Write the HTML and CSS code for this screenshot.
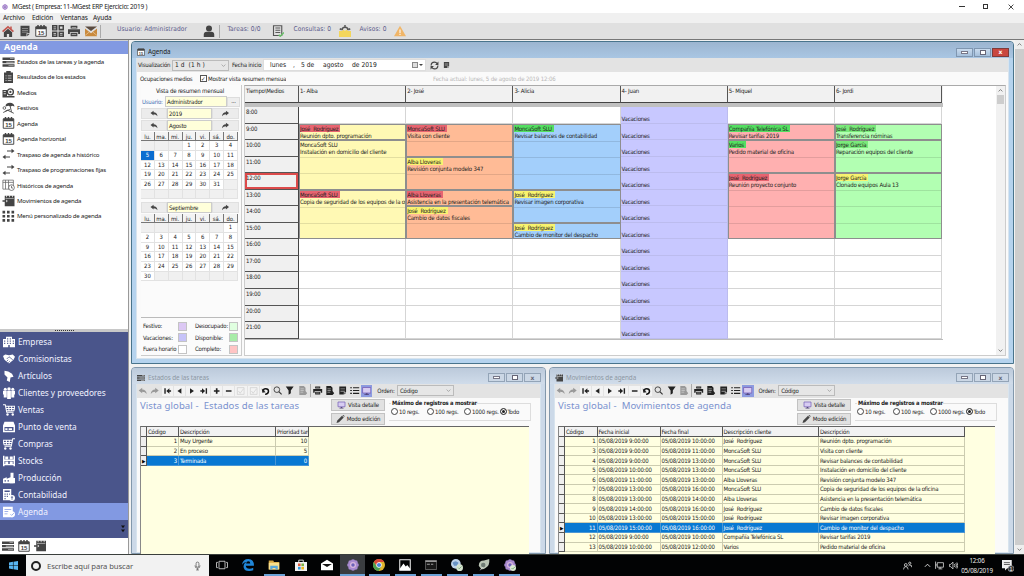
FILE: index.html
```html
<!DOCTYPE html>
<html lang="es">
<head>
<meta charset="utf-8">
<title>MGest ( Empresa: 11-MGest ERP Ejercicio: 2019 )</title>
<link rel="stylesheet" href="styles.css">
</head>
<body>
<svg class="defs" aria-hidden="true">
  <symbol id="home" viewBox="0 0 16 16"><path fill="#c4574f" d="M8 1 0 8l1.500 1.500L8 4l6.500 5.500L16 8l-3-2.700V2h-2v1.600z"/><path d="M2.500 9.500 8 5l5.500 4.500V16h-4v-4h-3v4h-4z"/></symbol>
  <symbol id="doc" viewBox="0 0 16 16"><path d="M2 1h12v10h-4v4H2z"/><path fill="#999" d="M4 4h8v1H4zM4 6.500h8v1H4zM4 9h8v1H4z"/><path d="m11 15 3-3h-3z"/></symbol>
  <symbol id="cal" viewBox="0 0 16 16"><path fill="#fff" stroke="#444" stroke-width="1.300" d="M1 2.500h14V15H1z"/><path d="M1 2h14v3.500H1zM3 0h2v3H3zM7 0h2v3H7zM11 0h2v3h-2z"/><text x="8" y="13.500" class="cal-num">15</text></symbol>
  <symbol id="grid" viewBox="0 0 16 16"><path fill-rule="evenodd" d="M0 0h7.300v7.300H0zM8.700 0H16v7.300H8.700zM0 8.700h7.300V16H0zM8.700 8.700H16V16H8.700zM2 2v1h3.300V2zM2 4.500v1h3.300v-1zM10.700 2v3h3.300V2zM2 11v1h3.300v-1zM2 13v1h3.300v-1zM10.700 11v1h3.300v-1zM10.700 13v1h3.300v-1z"/></symbol>
  <symbol id="print" viewBox="0 0 16 16"><path d="M3.500 1h9v3.500h-9zM0 5.500h16V12h-2.500V9.500h-11V12H0zM3.500 10.500h9V15h-9z"/><path fill="#eee" d="M5 12h6v.8H5zM5 2.500h6v.8H5z"/></symbol>
  <symbol id="mail" viewBox="0 0 16 16"><path fill="#5a4b40" d="M0 2h16l-8 6z"/><path fill="#c98a3d" d="M0 4.500 8 11l8-6.500V15H0z"/><path stroke="#e7c79c" fill="none" d="m0 14 6-5m10 5-6-5"/></symbol>
  <symbol id="person" viewBox="0 0 16 16"><circle cx="8" cy="4.500" r="4"/><path d="M1 16v-3q0-4 4-4h6q4 0 4 4v3z"/></symbol>
  <symbol id="check-doc" viewBox="0 0 16 16"><path fill="none" stroke="#555" stroke-width="1.500" d="M2 1h11v13H2z"/><path stroke="#555" stroke-width="1.300" d="M4.500 4H11M4.500 7H11M4.500 10H11"/><path stroke="#6ac06a" fill="none" stroke-width="2" d="m9 13 2 2 5-5"/></symbol>
  <symbol id="bell" viewBox="0 0 16 16"><path fill="none" stroke="#555" stroke-width="2" d="M4 7q0-4 4-4t4 4M8 3V0M1 5l2 1M15 5l-2 1"/><path fill="#f3d65c" d="M0 8h4l2-2 2 2 2-2 2 2h4v8H0z"/></symbol>
  <symbol id="warn" viewBox="0 0 16 16"><path fill="#f0b567" d="M8 1 16 15H0z"/><path fill="#fff" d="M7.300 6h1.400v5H7.300zM7.300 12h1.400v1.400H7.300z"/></symbol>
  <symbol id="bars" viewBox="0 0 16 16"><path d="M0 2h16v3.200H0zM0 6.500h16v3.200H0zM0 11h16v3.200H0z"/><path fill="#ddd" d="M10 3.200h5v.8h-5zM5 7.700h10v.8H5zM8 12.200h7v.8H8z"/></symbol>
  <symbol id="clip" viewBox="0 0 16 16"><path d="M2 2h3V0h6v2h3v14H2z"/><path fill="#ddd" d="M4 6h1.500v1H4zM7 6h5v1H7zM4 9h1.500v1H4zM7 9h5v1H7zM4 12h1.500v1H4zM7 12h5v1H7z"/></symbol>
  <symbol id="media" viewBox="0 0 16 16"><path d="M0 4h6v9H0zM0 12h16v2H0z"/><path stroke="#fff" d="M1.500 6h3M1.500 9h3"/><circle cx="10.500" cy="6.500" r="4" fill="#fff" stroke="#444" stroke-width="1.800"/><circle cx="10.500" cy="6.500" r="1.500"/></symbol>
  <symbol id="palm" viewBox="0 0 16 16"><path d="M4 6q0-5 6-5 5 0 6 5l-3-1-2 1-3-1z"/><path fill="none" stroke="#444" stroke-width="1.200" d="m10 5 2 8M1 14l6-3 8 4M4 12l6-2"/><circle cx="2.500" cy="8" r="1.800" fill="none" stroke="#444"/></symbol>
  <symbol id="swap" viewBox="0 0 16 16"><path fill="none" stroke="#444" stroke-width="1.600" d="M6 4h7M3 12h7"/><path d="m12 1 4 3-4 3zM4 9l-4 3 4 3z"/></symbol>
  <symbol id="hist" viewBox="0 0 16 16"><path fill="none" stroke="#666" d="M.5 1.500h14v12H.5zM.5 4.500h14M4 1.500v12M8 1.500v12"/><circle cx="12" cy="11.500" r="3.800" fill="#fff" stroke="#555"/><path fill="none" stroke="#555" d="M12 9v3h2"/></symbol>
  <symbol id="mov" viewBox="0 0 16 16"><path d="M3 1h13v14H3zM0 7h6v2H0z"/><path fill="#eee" d="M5 0h1v3H5zM9 0h1v3H9zM13 0h1v3h-1zM4 4.500h11v.8H4zM7 8 5 6v4z"/></symbol>
  <symbol id="dots" viewBox="0 0 16 16"><path d="M0 1h3.500v3.500H0zM6 1h3.500v3.500H6zM12 1h3.500v3.500H12zM0 6.500h3.500V10H0zM6 6.500h3.500V10H6zM12 6.500h3.500V10H12zM0 12h3.500v3.500H0zM6 12h3.500v3.500H6zM12 12h3.500v3.500H12z"/></symbol>
  <symbol id="building" viewBox="0 0 16 16"><path fill-rule="evenodd" d="M0 4h4V1h8v3h4v11H0zM1.500 6v1.500H3V6zM1.500 9v1.500H3V9zM5.500 3v1.500H7V3zM9 3v1.500h1.500V3zM5.500 6v1.500H7V6zM9 6v1.500h1.500V6zM5.500 9v1.500H7V9zM9 9v1.500h1.500V9zM13 6v1.500h1.500V6zM13 9v1.500h1.500V9zM7 12v3h2v-3z"/></symbol>
  <symbol id="hands" viewBox="0 0 16 16"><path d="M0 4 3 2l5 1 5-1 3 3-2 4-6 5-6-5z"/><path fill="none" stroke="#4a558b" d="m5 8 3-3 5 4M5 11l2-2m0 4 2-2"/></symbol>
  <symbol id="box" viewBox="0 0 16 16"><path d="m2 1 5 1 5 3 2 4-4 1-1 6-4-2 1-4-4-4z"/></symbol>
  <symbol id="people" viewBox="0 0 16 16"><circle cx="3" cy="3" r="2"/><circle cx="8" cy="2.500" r="2.300"/><circle cx="13" cy="3" r="2"/><path d="M0 5h5v9H1v-4H0zM5.500 5h5v11h-5zM11 5h5v5h-1v4h-4z"/></symbol>
  <symbol id="cart" viewBox="0 0 16 16"><path fill="none" stroke="currentColor" stroke-width="1.400" d="M0 1h3l2 10h9M3.500 3H16l-1.500 6H5M4 6h11M7.500 3l.5 6M11.500 3v6"/><circle cx="6" cy="14" r="1.600"/><circle cx="13" cy="14" r="1.600"/></symbol>
  <symbol id="cart-left" viewBox="0 0 16 16"><path fill="none" stroke="currentColor" stroke-width="1.400" d="M16 1h-3l-2 10H2M12.500 3H0l1.500 6H11M12 6H1M8.500 3 8 9M4.500 3v6"/><circle cx="10" cy="14" r="1.600"/><circle cx="3" cy="14" r="1.600"/></symbol>
  <symbol id="shop" viewBox="0 0 16 16"><path fill-rule="evenodd" d="M2 1h12l2 5v9H0V6zM2 8v5h12V8zM3 9.500h3V12H3zM7.500 9.500H12V12H7.500z"/></symbol>
  <symbol id="stock" viewBox="0 0 16 16"><path fill-rule="evenodd" d="M0 1h2v5h12V1h2v14h-2v-1.500H2V15H0zM2 8v4h12V8zM3 2h4v3.500H3zM9 2h4v3.500H9zM3 8.500h4V12H3zM9 8.500h4V12H9z"/></symbol>
  <symbol id="factory" viewBox="0 0 16 16"><path d="M0 15V9l5-2v2l5-2V1h4v14z"/><path d="M9 8h7v7H9z"/><path fill="#4a558b" d="M2 11h2v1.500H2zM6 11h2v1.500H6z"/></symbol>
  <symbol id="calc" viewBox="0 0 16 16"><path fill-rule="evenodd" d="M0 0h11v15H0zM2 2v2h7V2zM2 6v1.500h1.500V6zM5 6v1.500h1.500V6zM8 6v1.500h1V6zM2 9v1.500h1.500V9zM5 9v1.500h1.500V9zM2 12v1.500h1.500V12z"/><circle cx="12" cy="12" r="4"/><path stroke="#4a558b" d="M12 9.500v5M10.500 11h3"/></symbol>
  <symbol id="agenda" viewBox="0 0 16 16"><path fill-rule="evenodd" d="M0 1h13v14H0zM2 4v1h9V4zM2 7v1h5V7zM2 10v1h4v-1z"/><circle cx="12" cy="11" r="4"/><path fill="none" stroke="#8299e2" d="m10 11 1.500 1.500 3-3"/></symbol>
  <symbol id="more" viewBox="0 0 16 16"><path fill="#111" d="M4 1h8L8 6.500zM4 9h8l-4 5.500z"/></symbol>
  <symbol id="back" viewBox="0 0 16 16"><path d="M0 7 7 1.500V5q8 0 9 9-3-4.500-9-4.500v3z"/></symbol>
  <symbol id="fwd" viewBox="0 0 16 16"><path d="M16 7 9 1.500V5q-8 0-9 9 3-4.500 9-4.500v3z"/></symbol>
  <symbol id="first" viewBox="0 0 16 16"><path d="M2 3h2.500v10H2zM11 3v10L5.500 8zM11 6.500h3v3h-3z"/></symbol>
  <symbol id="prev" viewBox="0 0 16 16"><path d="M11 3v10L4 8z"/></symbol>
  <symbol id="next" viewBox="0 0 16 16"><path d="M5 3v10l7-5z"/></symbol>
  <symbol id="last" viewBox="0 0 16 16"><path d="M11.500 3H14v10h-2.500zM5 3v10l5.500-5zM2 6.500h3v3H2z"/></symbol>
  <symbol id="plus" viewBox="0 0 16 16"><path d="M6.500 3h3v3.500H13v3H9.500V13h-3V9.500H3v-3h3.500z"/></symbol>
  <symbol id="minus" viewBox="0 0 16 16"><path d="M3 6.500h10v3H3z"/></symbol>
  <symbol id="ghost" viewBox="0 0 16 16"><path fill="none" stroke="#c4c4c4" d="M2 2h12v12H2zM4 8l3 4 6-8"/></symbol>
  <symbol id="undo" viewBox="0 0 16 16"><path fill="none" stroke="#111" stroke-width="2.600" d="M7 14q6-1 6-5.500T8 4 4.500 8"/><path d="M1 3.500 8 10l-6 1z"/></symbol>
  <symbol id="find" viewBox="0 0 16 16"><circle cx="6.500" cy="6.500" r="5" fill="none" stroke="#333" stroke-width="1.500"/><path stroke="#333" stroke-width="2" d="m10 10 5 5"/></symbol>
  <symbol id="funnel" viewBox="0 0 16 16"><path d="M1 1h14L10 8v5l-4 2.500V8z"/></symbol>
  <symbol id="docs" viewBox="0 0 16 16"><path d="M2 0h8l3 3v6l3 4-3 3H2z"/><path stroke="#ddd" d="M4 5h6M4 8h6M4 11h5"/></symbol>
  <symbol id="list" viewBox="0 0 16 16"><path d="M0 2h3v2H0zM5 2h11v2H5zM0 7h3v2H0zM5 7h11v2H5zM0 12h3v2H0zM5 12h11v2H5z"/></symbol>
  <symbol id="screen" viewBox="0 0 16 16"><path fill="#d7ccf2" stroke="#7a63b8" stroke-width="1.500" d="M1 2h14v9.500H1z"/><path fill="#53457d" d="M6.500 12h3v1.500H12V15H4v-1.500h2.500z"/></symbol>
  <symbol id="pencil" viewBox="0 0 16 16"><path d="m0 16 1.500-5L11 1.500 14.500 5 5 14.500zM12 .500 13 0q3 0 3 3l-.6 1z"/></symbol>
  <symbol id="sync" viewBox="0 0 16 16"><path fill="none" stroke="#444" stroke-width="2" d="M2 8q0-6 6-6 3 0 5 3M14 8q0 6-6 6-3 0-5-3"/><path d="M15 1v6H9zM1 15V9h6z"/></symbol>
  <symbol id="flower" viewBox="0 0 16 16"><g fill="#a98bd0"><circle cx="8" cy="3" r="2.800"/><circle cx="11.500" cy="4.500" r="2.800"/><circle cx="13" cy="8" r="2.800"/><circle cx="11.500" cy="11.500" r="2.800"/><circle cx="8" cy="13" r="2.800"/><circle cx="4.500" cy="11.500" r="2.800"/><circle cx="3" cy="8" r="2.800"/><circle cx="4.500" cy="4.500" r="2.800"/></g><circle cx="8" cy="8" r="4" fill="#d9b7dc"/><circle cx="8" cy="8" r="2.300" fill="#6b62b8"/></symbol>
  <symbol id="win" viewBox="0 0 16 16"><path fill="#58b5f0" d="m0 2.500 7-1v6H0zM8 1.300 16 0v7.500H8zM0 8.500h7v6l-7-1zM8 8.500h8V16l-8-1.300z"/></symbol>
  <symbol id="mic" viewBox="0 0 16 16"><rect x="5.500" y="1" width="5" height="9" rx="2.500" fill="none" stroke="#555" stroke-width="1.300"/><path fill="none" stroke="#555" stroke-width="1.300" d="M3.500 7q0 5 4.500 5t4.500-5M8 12v3M5.500 15h5"/></symbol>
  <symbol id="taskview" viewBox="0 0 16 16"><path fill="none" stroke="#ccc" stroke-width="1.200" d="M4 3h8v10H4zM2.500 4.500H.700v7h1.800M13.500 4.500h1.800v7h-1.800"/></symbol>
  <symbol id="edge" viewBox="0 0 16 16"><path fill="#2086d8" d="M0 7.500Q1 0 8.500 0 16 0 16 9H5q.5 4 5 4 2.500 0 5-1.500V15q-2.500 1-5.500 1Q2 16 2 9.500 2 6 6 4 2 4.500 0 7.500zM5.500 6H11q0-3-2.500-3Q6 3 5.500 6z"/></symbol>
  <symbol id="folder" viewBox="0 0 16 16"><path fill="#d6a640" d="M1 2h6l1 2h7v10H1z"/><path fill="#f9df8c" d="M1 5h14v9H1z"/><path fill="#59a7da" d="M3 9h10v5h-3v-2H6v2H3z"/></symbol>
  <symbol id="store" viewBox="0 0 16 16"><path fill="none" stroke="#eee" stroke-width="1.200" d="M5 5V1.500h6V5"/><path fill="#f2f2f2" d="M0 4h16v12H0z"/><path fill="#e25b3a" d="M4 6h3.500v3.500H4z"/><path fill="#7cb342" d="M8.500 6H12v3.500H8.500z"/><path fill="#2e9be0" d="M4 10.500h3.500V14H4z"/><path fill="#f2b51d" d="M8.500 10.500H12V14H8.500z"/></symbol>
  <symbol id="envelope" viewBox="0 0 16 16"><path fill="#fff" d="m0 6 8-5 8 5v9H0z"/><path fill="#111" d="M1.500 6.500h13L8 10.500z"/></symbol>
  <symbol id="chrome" viewBox="0 0 16 16"><circle cx="8" cy="8" r="8" fill="#e0b52e"/><path fill="#d8483a" d="M1 4a8 8 0 0 1 14 0H8L5 9z"/><path fill="#4b9e51" d="M1 4a8 8 0 0 0 6.500 12L11 10H5z"/><circle cx="8" cy="8" r="3.600" fill="#fff"/><circle cx="8" cy="8" r="2.800" fill="#4a84e0"/></symbol>
  <symbol id="photo" viewBox="0 0 16 16"><path fill="none" stroke="#eee" stroke-width="1.400" d="M1 1h14v14H1z"/><path fill="#fff" d="m1 13 5-7 3 4 2-2 4 5v2H1z"/></symbol>
  <symbol id="cmd" viewBox="0 0 16 16"><path fill="#181818" stroke="#777" d="M.5 2h15v12H.5z"/><path fill="#999" d="M.5 2h15v2H.5z"/><path stroke="#ccc" d="M2.500 7h4M8 7h3"/></symbol>
  <symbol id="globe" viewBox="0 0 16 16"><circle cx="6.500" cy="6.500" r="6.500" fill="#bfd4ea"/><path fill="#6994c6" d="M2 5q4-4 8 0l-2 4H4z"/><circle cx="11.500" cy="11.500" r="4.500" fill="#d4e4cf"/><path fill="none" stroke="#6a9a6a" d="m9.500 11.500 1.500 1.500 3-3"/></symbol>
  <symbol id="leaf" viewBox="0 0 16 16"><path fill="#b9c4b4" d="M1 9q0-7 7-7l7-2q1 9-5 12-4 3-6 1z"/><circle cx="7" cy="8" r="3" fill="#6f7c74"/><path stroke="#e0e0e0" d="m3 15 3-4"/></symbol>
  <symbol id="disk" viewBox="0 0 16 16"><use href="#flower"/><circle cx="12" cy="12" r="4" fill="#dbe8d5"/><path fill="none" stroke="#5a9a5a" d="m10 12 1.500 1.500 3-3"/></symbol>
  <symbol id="people2" viewBox="0 0 16 16"><g fill="none" stroke="#eee" stroke-width="1.300"><circle cx="5" cy="7" r="2.500"/><path d="M1 15q0-5 4-5t4 5"/><circle cx="12" cy="4" r="2"/><path d="M9.500 9q1-3 5.500-1v3"/></g></symbol>
  <symbol id="up" viewBox="0 0 16 16"><path fill="none" stroke="currentColor" stroke-width="2" d="m2 11 6-6 6 6"/></symbol>
  <symbol id="down" viewBox="0 0 16 16"><path fill="none" stroke="currentColor" stroke-width="2" d="m2 5 6 6 6-6"/></symbol>
  <symbol id="net" viewBox="0 0 16 16"><path fill="none" stroke="#eee" stroke-width="1.300" d="M4 3h11v8H4zM9 11v3M6 14h7M1 1v6h3M1 7v7"/></symbol>
  <symbol id="sound" viewBox="0 0 16 16"><path fill="none" stroke="#eee" stroke-width="1.300" d="M1 6h2l4-4v12l-4-4H1zM9.500 5.500q2 2.500 0 5M12 4q3 4 0 8M14 2.500q3.500 5.500 0 11"/></symbol>
  <symbol id="note" viewBox="0 0 16 16"><path fill="#eee" d="M0 0h13v11H7l-3 3v-3H0z"/><path stroke="#333" d="M2.500 3.500h8M2.500 6h8"/><circle cx="12" cy="11.500" r="4" fill="#333" stroke="#bbb" stroke-width=".8"/><text x="12" y="14" class="note-num">1</text></symbol>
</svg>

<div class="app">
  <header class="titlebar">
    <svg class="i7"><use href="#flower"/></svg>
    <span class="t-title">MGest ( Empresa: 11-MGest ERP Ejercicio: 2019 )</span>
    <span class="win-min"></span><span class="win-max"></span>
    <svg class="win-x" viewBox="0 0 10 10"><path d="m1 1 8 8M9 1 1 9"/></svg>
  </header>
  <nav class="menubar"><span>Archivo</span><span>Edición</span><span>Ventanas</span><span>Ayuda</span></nav>
  <div class="toolbar">
    <svg><use href="#home"/></svg><svg><use href="#doc"/></svg><svg><use href="#cal"/></svg><svg><use href="#grid"/></svg><svg><use href="#print"/></svg><svg><use href="#mail"/></svg>
    <i class="vsep"></i><span>Usuario: Administrador</span><svg><use href="#person"/></svg><i class="vsep"></i><span>Tareas: 0/0</span><svg><use href="#check-doc"/></svg><span>Consultas: 0</span><svg><use href="#bell"/></svg><span>Avisos: 0</span><svg><use href="#warn"/></svg>
  </div>

  <div class="main">
    <aside class="side">
      <h1 class="side-head">Agenda</h1>
      <ul class="side-list">
        <li><svg><use href="#bars"/></svg>Estados de las tareas y la agenda</li>
        <li><svg><use href="#clip"/></svg>Resultados de los estados</li>
        <li><svg><use href="#media"/></svg>Medios</li>
        <li><svg><use href="#palm"/></svg>Festivos</li>
        <li><svg><use href="#cal"/></svg>Agenda</li>
        <li><svg><use href="#cal"/></svg>Agenda horizontal</li>
        <li><svg><use href="#swap"/></svg>Traspaso de agenda a histórico</li>
        <li><svg><use href="#swap"/></svg>Traspaso de programaciones fijas</li>
        <li><svg><use href="#hist"/></svg>Históricos de agenda</li>
        <li><svg><use href="#mov"/></svg>Movimientos de agenda</li>
        <li><svg><use href="#dots"/></svg>Menú personalizado de agenda</li>
      </ul>
      <div class="splitter"><i></i></div>
      <ul class="side-nav">
        <li><svg><use href="#building"/></svg>Empresa</li>
        <li><svg><use href="#hands"/></svg>Comisionistas</li>
        <li><svg><use href="#box"/></svg>Artículos</li>
        <li><svg><use href="#people"/></svg>Clientes y proveedores</li>
        <li><svg><use href="#cart"/></svg>Ventas</li>
        <li><svg><use href="#shop"/></svg>Punto de venta</li>
        <li><svg><use href="#cart-left"/></svg>Compras</li>
        <li><svg><use href="#stock"/></svg>Stocks</li>
        <li><svg><use href="#factory"/></svg>Producción</li>
        <li><svg><use href="#calc"/></svg>Contabilidad</li>
        <li class="active"><svg><use href="#agenda"/></svg>Agenda</li>
        <li class="more"><svg><use href="#more"/></svg></li>
      </ul>
      <div class="side-foot"><svg><use href="#bars"/></svg><svg><use href="#cal"/></svg><svg><use href="#mov"/></svg></div>
    </aside>

    <section class="mdi">
      <article class="win win-agenda">
        <div class="win-bar"><svg><use href="#cal"/></svg><span>Agenda</span><div class="wb"><b class="m"></b><b class="r"></b><b class="x">x</b></div></div>
        <div class="win-body">
          <div class="ag-tools">
            <span>Visualización</span><div class="combo wide">1 d&nbsp; (1 h )<svg><use href="#down"/></svg></div><span>Fecha inicio</span>
            <div class="date"><span>lunes</span><span>,</span><span>5 de</span><span>agosto</span><span>de 2019</span><i class="date-btn"></i><i class="caret"></i></div>
            <svg><use href="#sync"/></svg><svg><use href="#doc"/></svg>
          </div>
          <div class="ag-sub"><span>Ocupaciones medios</span><i class="chk">✓</i><span>Mostrar vista resumen mensual</span><span class="faint">Fecha actual: lunes, 5 de agosto de 2019 12:06</span></div>
          <div class="ag-main">
            <div class="months">
              <div class="m-title">Vista de resumen mensual</div>
              <div class="m-user"><span>Usuario:</span><b>Administrador</b><i>...</i></div>
              <div class="m-nav"><svg><use href="#back"/></svg><b>2019</b><svg><use href="#fwd"/></svg></div>
              <div class="m-nav"><svg><use href="#back"/></svg><b>Agosto</b><svg><use href="#fwd"/></svg></div>
              <div class="month" data-offset="3" data-days="31" data-today="5"></div>
              <div class="m-nav sep"><svg><use href="#back"/></svg><b>Septiembre</b><svg><use href="#fwd"/></svg></div>
              <div class="month" data-offset="6" data-days="30"></div>
              <div class="legend">
                <span>Festivo:</span><i class="festivo"></i><span>Desocupado:</span><i class="desocupado"></i>
                <span>Vacaciones:</span><i class="vacaciones"></i><span>Disponible:</span><i class="disponible"></i>
                <span>Fuera horario</span><i class="fuera"></i><span>Completo:</span><i class="completo"></i>
              </div>
            </div>
            <div class="sched">
              <div class="sched-inner">
                <div class="sched-head"><span>Tiempo\Medios</span><span>1- Alba</span><span>2- José</span><span>3- Alicia</span><span>4- Juan</span><span>5- Miquel</span><span>6- Jordi</span></div>
                <div class="sched-band"></div>
                <div class="sched-grid" id="sched"></div>
              </div>
              <div class="vscroll"><svg><use href="#up"/></svg><i></i><svg><use href="#down"/></svg></div>
            </div>
          </div>
        </div>
      </article>

      <div class="lower">
        <article class="win sub tasks">
          <div class="win-bar"><svg><use href="#bars"/></svg><span>Estados de las tareas</span><div class="wb"><b class="m"></b><b class="r"></b><b class="x">x</b></div></div>
          <div class="win-body">
            <div class="db-tools" data-icons="back fwd first prev next last plus minus ghost ghost undo find funnel docs | print docs doc list screen"></div>
            <div class="db-head"><h2>Vista global - &nbsp;Estados de las tareas</h2><div class="btns"><button><svg><use href="#screen"/></svg>Vista detalle</button><button><svg><use href="#pencil"/></svg>Modo edición</button></div>
              <fieldset><legend>Máximo de registros a mostrar</legend><label><i></i>10 regs.</label><label><i></i>100 regs.</label><label><i></i>1000 regs.</label><label><i class="on"></i>Todo</label></fieldset></div>
            <div class="db-area"><table id="tasks"></table></div>
          </div>
        </article>
        <article class="win sub moves">
          <div class="win-bar"><svg><use href="#mov"/></svg><span>Movimientos de agenda</span><div class="wb"><b class="m"></b><b class="r"></b><b class="x">x</b></div></div>
          <div class="win-body">
            <div class="db-tools" data-icons="back fwd first prev next last minus undo find funnel docs | print docs doc list screen"></div>
            <div class="db-head"><h2>Vista global - &nbsp;Movimientos de agenda</h2><div class="btns"><button><svg><use href="#screen"/></svg>Vista detalle</button><button><svg><use href="#pencil"/></svg>Modo edición</button></div>
              <fieldset><legend>Máximo de registros a mostrar</legend><label><i></i>10 regs.</label><label><i></i>100 regs.</label><label><i></i>1000 regs.</label><label><i class="on"></i>Todo</label></fieldset></div>
            <div class="db-area"><table id="moves"></table></div>
          </div>
        </article>
      </div>
    </section>
    <div class="mdi-scroll"><svg><use href="#up"/></svg><i></i><svg><use href="#down"/></svg></div>
  </div>

  <footer class="taskbar">
    <div class="start"><svg><use href="#win"/></svg></div>
    <div class="search"><i></i><span>Escribe aquí para buscar</span><svg><use href="#mic"/></svg></div>
    <div class="apps"><div><svg><use href="#taskview"/></svg></div><div><svg><use href="#edge"/></svg></div><div class="open"><svg><use href="#folder"/></svg></div><div><svg><use href="#store"/></svg></div><div><svg><use href="#envelope"/></svg></div><div class="open cur"><svg><use href="#flower"/></svg></div><div class="open"><svg><use href="#chrome"/></svg></div><div class="open"><svg><use href="#photo"/></svg></div><div class="open"><svg><use href="#cmd"/></svg></div><div class="open"><svg><use href="#globe"/></svg></div><div class="open"><svg><use href="#leaf"/></svg></div><div class="open"><svg><use href="#disk"/></svg></div></div>
    <div class="tray"><svg><use href="#people2"/></svg><svg><use href="#up"/></svg><svg><use href="#net"/></svg><svg><use href="#sound"/></svg><div class="clock"><span>12:06</span><span>05/08/2019</span></div><svg class="n"><use href="#note"/></svg></div>
  </footer>
</div>
<script src="app.js"></script>
</body>
</html>
```
FILE: styles.css
```css
* { box-sizing: border-box; }
body, h1, h2, ul { margin: 0; padding: 0; }
body { font: 6px/8px "DejaVu Sans Condensed", "DejaVu Sans", sans-serif; letter-spacing: -.2px; color: #222; width: 1024px; height: 576px; overflow: hidden; }
ul { list-style: none; }
svg { display: block; fill: #444; color: #444; flex: none; }
b, i { font-weight: normal; font-style: normal; }
span, li, td, th, button, label, legend, h2 { white-space: nowrap; }
.defs { position: absolute; width: 0; height: 0; }
.cal-num { font: bold 8px "Liberation Sans", sans-serif; text-anchor: middle; letter-spacing: 0; }
.note-num { font: 7px "Liberation Sans", sans-serif; text-anchor: middle; fill: #fff; }
.app { display: flex; flex-direction: column; height: 576px; }

.titlebar { height: 13px; background: #fff; display: grid; grid-template-columns: 12px 947px 24px 25px 8px; align-items: center; font: 6.5px/12px "Noto Sans", sans-serif; letter-spacing: -.24px; }
.i7 { width: 6px; height: 6px; margin-left: 2px; }
.win-min { width: 6px; height: 1px; background: #333; }
.win-max { width: 5px; height: 5px; border: 1px solid #333; }
.win-x { width: 6px; height: 6px; stroke: #333; stroke-width: 1.5; fill: none; }
.menubar { height: 10px; background: #f0f0f0; display: grid; grid-template-columns: 29px 28.5px 32.5px 30px; padding-left: 3px; font: 6.5px/9px "Noto Sans", sans-serif; letter-spacing: -.12px; }
.toolbar { height: 17px; background: #e0e0e0; border-bottom: 1px solid #777; display: grid; align-items: center;
  grid-template-columns: 17px 16px 16.5px 16.5px 16.5px 15.5px 17px 86px 15.500px 9px 44px 22px 45px 21px 34px 15px; padding-left: 2px; }
.toolbar svg { width: 12px; height: 12px; }
.toolbar span { font-size: 6.6px; color: #5b5b8c; height: 12px; line-height: 9px; letter-spacing: .08px; }
.vsep { width: 1px; height: 13px; background: #aaa; }

.main { height: 514px; display: flex; }
.side { width: 129px; display: flex; flex-direction: column; border-right: 1px solid #999; }
.side-head { height: 14px; border-top: 1px solid #d0d0d0; background: #8299e2; color: #fff; font: bold 8.8px/12px "Noto Sans", sans-serif; padding-left: 4px; letter-spacing: .05px; }
.side-list { height: 274.5px; background: #fff; font: 6.1px/15.4px "Noto Sans", sans-serif; letter-spacing: -.22px; }
.side-list li { display: flex; align-items: center; gap: 2px; height: 15.45px; padding-left: 2px; }
.side-list svg { width: 13px; height: 12px; }
.splitter { height: 3.5px; background: #c8c8c8; display: flex; justify-content: center; align-items: center; }
.splitter i { width: 19px; border-top: 1px dotted #333; }
.side-nav { height: 206px; background: #4a558b; color: #f0f2ff; font: 8.3px/17px "Noto Sans", sans-serif; letter-spacing: -.03px; padding-top: 1px; }
.side-nav li { height: 17px; display: flex; align-items: center; gap: 3px; padding-left: 3px; }
.side-nav svg { width: 12px; height: 12px; fill: #fff; color: #fff; }
.side-nav .active { background: #8299e2; }
.side-nav .more { justify-content: flex-end; padding-right: 1px; }
.side-nav .more svg { width: 8px; height: 8px; }
.side-foot { height: 16px; background: #fff; display: flex; gap: 4px; align-items: center; padding-left: 2px; }
.side-foot svg { width: 12px; height: 12px; }

.mdi { width: 886px; background: #f2f2f2; padding: 1px 0 0 2px; display: flex; flex-direction: column; gap: 3px; overflow: hidden; }
.mdi-scroll { width: 9px; background: #cdcdcd; display: flex; flex-direction: column; justify-content: space-between; }
.mdi-scroll svg { width: 9px; height: 9px; padding: 2px; background: #eee; }
.win { background: #b5d3ee; border: 1px solid #56738e; border-radius: 4px 4px 0 0; padding: 0 4px 4px; display: flex; flex-direction: column; }
.win-agenda { height: 323px; width: 883px; border-color: #49748c; flex: none; }
.win-bar { height: 16px; flex: none; display: flex; align-items: center; gap: 3px; margin: 0 -4px; padding: 0 4px 0 5px; background: linear-gradient(#9cb5d0, #a9c6e3); border-radius: 3px 3px 0 0; font: 6.3px/12px "Noto Sans", sans-serif; letter-spacing: -.05px; }
.win-bar span { padding-top: 4px; }
.win-bar svg { width: 8px; height: 8px; margin-top: 4px; }
.wb { margin: 4px 0 0 auto; display: flex; gap: 1px; }
.wb b { width: 17px; height: 9px; border: 1px solid #7f96b0; background: linear-gradient(#c9dbee, #a5bfda); display: flex; justify-content: center; align-items: center; font: bold 6px/6px "DejaVu Sans", sans-serif; color: #fff; }
.wb .m::before { content: ""; width: 5px; height: 1px; border: 1px solid #778; background: #fff; }
.wb .r::before { content: ""; width: 4px; height: 3px; border: 1px solid #667; background: #fff; }
.win-agenda .wb .x { background: #c9473f; border-color: #7d3c3c; }
.win-body { flex: 1; background: #fafafa; border: 1px solid #d8e4ee; border-top: 0; min-height: 0; }

.ag-tools { height: 14px; background: #e3e3e3; display: grid; align-items: center; grid-template-columns: 34px 60px 31px 167px 13px 10px; padding-left: 1px; }
.combo { border: 1px solid #bbb; background: #e6e6e6; height: 11px; width: 57px; padding: 0 2px; display: flex; justify-content: space-between; align-items: center; }
.combo.wide { font-size: 6.500px; letter-spacing: .1px; }
.combo svg { width: 5px; height: 5px; color: #888; }
.date { background: #fff; height: 12px; width: 163px; display: grid; grid-template-columns: 23px 8px 22px 29px 60px 7px 5px; align-items: center; padding-left: 6px; font-size: 6.7px; letter-spacing: 0; border: 1px solid #ddd; }
.date-btn { width: 6px; height: 6px; background: #ddd; border: 1px solid #888; }
.caret { border: 2px solid transparent; border-top-color: #444; border-bottom: 0; width: 4px; }
.ag-tools > svg { width: 9px; height: 9px; }
.ag-tools > svg + svg { width: 7px; height: 8px; }
.ag-sub { height: 13px; display: grid; align-items: center; grid-template-columns: 60px 8px 225px 1fr; padding-left: 3px; }
.ag-sub span:nth-child(3) { width: 78px; overflow: hidden; }
.chk { width: 7px; height: 7px; border: 1px solid #555; background: #fff; line-height: 5px; letter-spacing: 0; }
.faint { color: #b8b8b8; letter-spacing: -.13px; }
.ag-main { display: flex; gap: 2px; padding-left: 4px; }
.months { width: 101px; height: 271px; border-right: 1px solid #ccc; border-bottom: 1px solid #ccc; background: #fbfbfb; position: relative; }
.m-title { height: 11px; text-align: center; line-height: 11px; font-size: 6.100px; padding-right: 2px; }
.m-user { display: grid; grid-template-columns: 24px 62px 13px; height: 11px; align-items: center; }
.m-user span { color: #4770b5; padding-left: 1px; }
.m-user i { text-align: center; background: #eee; border: 1px solid #ddd; height: 10px; line-height: 6px; }
.months b { border: 1px solid #ccc; background: #ffffda; height: 11px; line-height: 9px; padding-left: 1px; }
.m-nav { display: grid; grid-template-columns: 26px 45px 27px; height: 12.4px; align-items: center; }
.m-nav svg { width: 100%; height: 11px; padding: 1px 0; background: #ececec; border: 1px solid #e0e0e0; }
.m-nav.sep { margin-top: 2px; }
.month { display: grid; grid-template-columns: repeat(7, 13.85px); grid-auto-rows: 9.65px; width: 98px; font-size: 5.900px; text-align: center; }
.month span { border-right: 1px solid #e2e2e2; border-bottom: 1px solid #e2e2e2; background: #fff; line-height: 9px; letter-spacing: 0; }
.month .wd { border-color: #777; background: #f3f3f3; line-height: 10px; }
.month .none { background: #f0f0f0; }
.month .today { background: #0b6dd0; color: #fff; }
.legend { position: absolute; left: 0; bottom: 0; width: 100px; border-top: 1px solid #bbb; padding-top: 2px; display: grid; grid-template-columns: 37px 17px 34px 10px; grid-auto-rows: 11.6px; align-items: center; }
.legend span { padding-left: 2px; }
.legend span:nth-child(4n+3) { padding-left: 0; }
.legend i { width: 9px; height: 9px; border: 1px solid #c4c4c4; }
.festivo { background: #dcc8f4; } .desocupado { background: #e0ffe0; } .vacaciones { background: #c6c3f8; } .disponible { background: #a8eca8; } .fuera { background: #fff; } .completo { background: #ffc4c4; }

.sched { width: 762px; height: 271px; border: 1px solid #ccc; border-top-color: #aaa; background: #fff; display: flex; justify-content: space-between; }
.sched-inner { width: 698px; }
.sched-head { height: 17px; display: grid; grid-template-columns: 54px repeat(6, 107.2px); background: #f1f1f1; }
.sched-head span { border-right: 1px solid #555; border-bottom: 1px solid #444; padding: 1px 1px; }
.sched-band { height: 4px; background: #c0c0c0; }
.sched-grid { display: grid; grid-template-columns: 54px repeat(6, 107.2px); grid-template-rows: repeat(14, 16.56px); border-bottom: 1px solid #bbb; }
.hour { background: #f0f0f0; border-right: 1px solid #444; border-bottom: 1px solid #555; padding: 1px; }
.hour.now { box-shadow: inset 0 0 0 2px #dc4a4a; }
.cell { border-right: 1px solid #d5d5d5; border-bottom: 1px solid #d5d5d5; background: #fff; }
.cell.vac { background: #c8c8ff; border-color: #bcbcee; padding: 8px 1px 0; }
.ev { border: 1px solid #8e8e8e; overflow: hidden; line-height: 7.500px; z-index: 1; background: repeating-linear-gradient(transparent 0 15.56px, #0000001c 15.56px 16.56px) var(--c); }
.ev mark { display: table; height: 7px; line-height: 7px; padding: 0 2px 0 0; color: #222; }
.ev span { display: block; }
.yellow { --c: #fff9b4; } .orange { --c: #ffbb96; } .blue { --c: #a3cffb; } .pink { --c: #ffb0b0; } .green { --c: #b2ffb2; }
.k-r { background: #e86470; } .k-y { background: #f8f36f; } .k-g { background: #54df61; } .k-n { background: transparent; }
.green .k-g { background: #7aea7a; }
.vscroll { width: 9px; background: #f1f1f1; display: flex; flex-direction: column; }
.vscroll svg { width: 9px; height: 9px; padding: 2px; }
.vscroll i { height: 9px; background: #cdcdcd; margin: 0 1px auto; }

.lower { display: flex; gap: 3px; height: 187px; flex: none; }
.sub { height: 187px; background: #ccd9e8; border-color: #8298ac; padding-bottom: 0; }
.tasks { width: 415px; } .moves { width: 465px; }
.sub .win-bar { background: linear-gradient(#bccadb, #d0dcea); color: #8d97a3; height: 15.500px; }
.sub .wb b { background: #cbd7e5; border-color: #93a4b7; color: #667; }
.db-tools { height: 14px; background: #e3e3e3; display: flex; align-items: center; }
.db-tools > svg { width: 11.4px; height: 9px; fill: #222; margin-right: .9px; }
.db-tools .step { background: #f3f3f3; height: 10px; padding: .5px; }
.db-tools > svg:nth-child(-n+2) { fill: #999; height: 8px; }
.db-tools .dim { fill: #999; }
.db-tools .vsep { margin: 0 1px; }
.db-tools .sel { background: #8d9be0; height: 12px; padding: 1px; }
.db-tools span { margin: 0 2.500px 0 4px; }
.db-head { height: 28.500px; display: flex; padding-top: .5px; }
h2 { font: 9.6px/15px "Noto Sans", sans-serif; color: #7b92cf; letter-spacing: .06px; width: 194px; padding-left: 3px; }
.moves h2 { width: 242px; }
.btns { display: flex; flex-direction: column; gap: 2px; width: 54px; padding-top: 1px; }
button { font: inherit; letter-spacing: inherit; height: 12px; border: 1px solid #c2c2c2; background: #e1e1e1; display: flex; align-items: center; justify-content: center; gap: 2px; padding: 0; color: #222; }
button svg { width: 9px; height: 8px; }
fieldset { margin: 1px 0 0 4px; border: 1px solid #ddd; width: 142px; height: 22px; padding: 0 0 0 2px; min-width: 0; display: grid; grid-template-columns: 36px 37px 35.500px 24px; border-left: 0; }
legend { font-weight: bold; font-size: 5.8px; padding: 0 0 0 1px; letter-spacing: -.2px; }
label { display: flex; align-items: center; gap: 1px; height: 9px; }
label i { width: 7px; height: 7px; border: 1px solid #444; border-radius: 50%; background: #fff; flex: none; }
label .on { background: #222; box-shadow: inset 0 0 0 1px #fff; }
.db-area { margin: 0 11px 0 3px; height: 130px; background: #ffffe1; border-top: 1px solid #666; border-left: 1px solid #888; overflow: hidden; }
.moves .db-area { margin-right: 13px; }
table { border-collapse: separate; border-spacing: 0; table-layout: fixed; }
th, td { height: 9.62px; padding: 0 1px; line-height: 8px; border-right: 1px solid #ccccb0; border-bottom: 1px solid #ccccb0; overflow: hidden; font-weight: normal; text-align: left; }
th { background: #f2f2f2; border-color: #555; height: 10px; }
td:first-child { background: #eee; border-color: #555; font-size: 5px; color: #000; letter-spacing: 0; }
.num { text-align: right; }
tr.sel td:not(:first-child) { background: #0878d2; color: #fff; border-color: #4b96d4; }

.taskbar { height: 22px; background: #020304; border-top: 1px solid #3a3f3c; display: flex; }
.start { width: 26px; display: flex; justify-content: center; align-items: center; }
.start svg { width: 9px; height: 9px; }
.search { width: 183px; background: #f2f2f2; display: flex; align-items: center; padding-left: 5px; font: 7.7px/18px "Noto Sans", sans-serif; letter-spacing: -.1px; color: #555; }
.search i { width: 10px; height: 10px; border: 2px solid #222; border-radius: 50%; margin-right: 6px; }
.search svg { width: 9px; height: 10px; margin-left: auto; margin-right: 7px; }
.apps { display: flex; padding-left: .7px; }
.apps div { width: 25px; margin-right: 1.150px; display: flex; align-items: center; justify-content: center; border-bottom: 2px solid transparent; }
.apps svg { width: 12px; height: 12px; }
.apps .open { border-color: #6ba2d6; width: 21px; margin: 0 3.150px 0 2px; }
.apps .cur { background: #3a3d40; width: 25px; margin: 0 1.150px 0 0; }
.tray { margin-left: auto; display: grid; grid-template-columns: 21px 11px 14px 11px 45px 17px; align-items: center; width: 121px; color: #eee; }
.tray svg { width: 9px; height: 9px; color: #eee; }
.tray svg:nth-child(2) { width: 7px; height: 7px; }
.tray .n { width: 12px; height: 12px; margin-left: -3px; }
.clock { font: 6.200px/9.500px "Noto Sans", sans-serif; display: flex; flex-direction: column; align-items: center; letter-spacing: -.12px; padding-right: 11px; }
```
FILE: app.js
```js
const icon = (name, cls = '') => `<svg class="${cls}"><use href="#${name}"/></svg>`;

// Mini calendars
document.querySelectorAll('.month').forEach(el => {
  const offset = +el.dataset.offset, days = +el.dataset.days, today = +el.dataset.today;
  let html = ['lu.', 'ma.', 'mi.', 'ju.', 'vi.', 'sá.', 'do.'].map(d => `<span class="wd">${d}</span>`).join('');
  for (let i = 0; i < 42; i++) {
    const d = i - offset + 1;
    html += d < 1 || d > days ? '<span class="none"></span>' : `<span class="${d === today ? 'today' : ''}">${d}</span>`;
  }
  el.innerHTML = html;
});

// Schedule: column, start hour, end hour, colour, tag colour, client, description
const events = [
  [1, 9, 10, 'yellow', 'r', 'José  Rodríguez', 'Reunión dpto. programación'],
  [1, 10, 13, 'yellow', 'n', 'MoncaSoft SLU', 'Instalación en domicilio del cliente'],
  [1, 13, 16, 'yellow', 'r', 'MoncaSoft SLU', 'Copia de seguridad de los equipos de la oficina'],
  [2, 9, 11, 'orange', 'r', 'MoncaSoft SLU', 'Visita con cliente'],
  [2, 11, 13, 'orange', 'y', 'Alba Lloveras', 'Revisión conjunta modelo 347'],
  [2, 13, 14, 'orange', 'r', 'Alba Lloveras', 'Asistencia en la presentación telemática'],
  [2, 14, 16, 'orange', 'y', 'José  Rodríguez', 'Cambio de datos fiscales'],
  [3, 9, 13, 'blue', 'g', 'MoncaSoft SLU', 'Revisar balances de contabilidad'],
  [3, 13, 15, 'blue', 'y', 'José  Rodríguez', 'Revisar imagen corporativa'],
  [3, 15, 16, 'blue', 'y', 'José  Rodríguez', 'Cambio de monitor del despacho'],
  [5, 9, 10, 'pink', 'g', 'Compañía Telefónica SL', 'Revisar tarifas 2019'],
  [5, 10, 12, 'pink', 'g', 'Varios', 'Pedido material de oficina'],
  [5, 12, 16, 'pink', 'r', 'José  Rodríguez', 'Reunión proyecto conjunto'],
  [6, 9, 10, 'green', 'g', 'José  Rodríguez', 'Transferencia nóminas'],
  [6, 10, 12, 'green', 'g', 'Jorge García', 'Reparación equipos del cliente'],
  [6, 12, 16, 'green', 'y', 'Jorge García', 'Clonado equipos Aula 13']
];
let sched = '';
for (let h = 8; h <= 21; h++) {
  const row = h - 7;
  sched += `<div class="hour${h === 12 ? ' now' : ''}" style="grid-area:${row}/1">${h}:00</div>`;
  for (let c = 1; c <= 6; c++)
    sched += `<div class="cell${c === 4 ? ' vac' : ''}" style="grid-area:${row}/${c + 1}">${c === 4 ? 'Vacaciones' : ''}</div>`;
}
for (const [c, a, b, col, key, who, what] of events)
  sched += `<div class="ev ${col}" style="grid-area:${a - 7}/${c + 1}/${b - 7}/${c + 2}"><mark class="k-${key}">${who.replace('  ', '&nbsp; ')}</mark><span>${what}</span></div>`;
document.getElementById('sched').innerHTML = sched;

// Database toolbars
const steps = ['first', 'prev', 'next', 'last', 'plus', 'minus', 'ghost', 'undo'];
document.querySelectorAll('.db-tools').forEach(el => {
  const names = el.dataset.icons.split(' ');
  const bar = names.indexOf('|');
  el.innerHTML = names.map((n, i) => n === '|' ? '<i class="vsep"></i>' :
    icon(n, n === 'screen' ? 'sel' : i === bar - 1 ? 'dim' : steps.includes(n) ? 'step' : '')).join('') +
    `<span>Orden:</span><div class="combo">Código${icon('down')}</div>`;
});

// Data tables
function fill(id, widths, heads, rows, selected, numeric) {
  const cls = i => numeric.includes(i) ? ' class="num"' : '';
  const table = document.getElementById(id);
  table.style.width = widths.reduce((a, b) => a + b) + 'px';
  table.innerHTML = `<colgroup>${widths.map(w => `<col style="width:${w}px">`).join('')}</colgroup>` +
    `<tr><th></th>${heads.map(h => `<th>${h}</th>`).join('')}</tr>` +
    rows.map(r => `<tr class="${r[0] === selected ? 'sel' : ''}"><td>${r[0] === selected ? '▶' : ''}</td>${r.map((v, i) => `<td${cls(i)}>${v}</td>`).join('')}</tr>`).join('');
}
fill('tasks', [6, 32, 97, 33], ['Código', 'Descripción', 'Prioridad tarea'],
  [[1, 'Muy Urgente', 10], [2, 'En proceso', 5], [3, 'Terminada', 0]], 3, [0, 2]);
const D = '05/08/2019 ';
fill('moves', [6, 32.5, 63, 62, 96.5, 145.5], ['Código', 'Fecha inicial', 'Fecha final', 'Descripción cliente', 'Descripción'], [
  [1, 9, 10, 'José&nbsp; Rodríguez', 'Reunión dpto. programación'],
  [3, 9, 11, 'MoncaSoft SLU', 'Visita con cliente'],
  [4, 9, 13, 'MoncaSoft SLU', 'Revisar balances de contabilidad'],
  [5, 10, 13, 'MoncaSoft SLU', 'Instalación en domicilio del cliente'],
  [6, 11, 13, 'Alba Lloveras', 'Revisión conjunta modelo 347'],
  [7, 13, 16, 'MoncaSoft SLU', 'Copia de seguridad de los equipos de la oficina'],
  [8, 13, 14, 'Alba Lloveras', 'Asistencia en la presentación telemática'],
  [9, 14, 16, 'José&nbsp; Rodríguez', 'Cambio de datos fiscales'],
  [10, 13, 15, 'José&nbsp; Rodríguez', 'Revisar imagen corporativa'],
  [11, 15, 16, 'José&nbsp; Rodríguez', 'Cambio de monitor del despacho'],
  [12, 9, 10, 'Compañía Telefónica SL', 'Revisar tarifas 2019'],
  [13, 10, 12, 'Varios', 'Pedido material de oficina']
].map(([n, a, b, c, d]) => [n, `${D}${a}:00:00`, `${D}${b}:00:00`, c, d]), 11, [0]);
```
